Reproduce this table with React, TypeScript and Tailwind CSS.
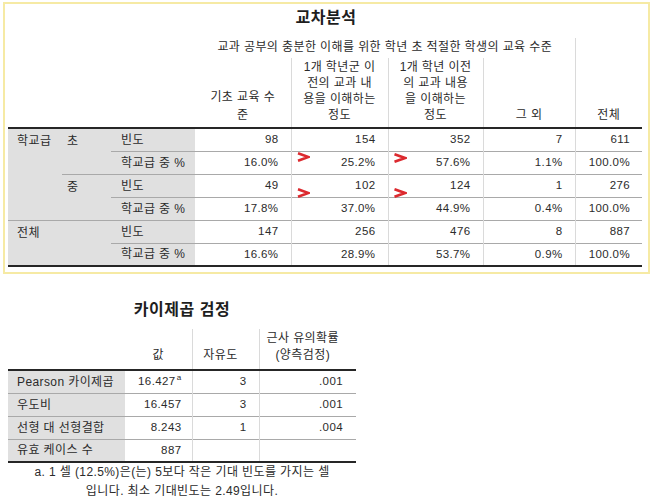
import React from "react";

const FONT = "font-['Liberation_Sans','Noto_Sans_CJK_KR',sans-serif]";

// one red chevron drawn on top of the crosstab
function Chevron({ className }: { className: string }) {
  return (
    <svg className={"absolute " + className} viewBox="0 0 13 10" fill="none">
      <polyline points="1,1.2 11.5,5 1,8.8" stroke="#dc2a2f" strokeWidth="2.6" strokeLinejoin="miter" />
    </svg>
  );
}

const gray = "bg-[#e0e0e0] align-top text-left";
const thin = "border-t border-t-[#a9a9a9]";
const thick = "border-t-2 border-t-[#262626]";
const vline = "border-l border-l-[#dadada]";

function Num({ v, first, cls = "" }: { v: string; first?: boolean; cls?: string }) {
  return (
    <td className={`p-0 pr-3 text-right align-middle text-[11.5px] ${first ? "" : vline} ${cls}`}>{v}</td>
  );
}

function Crosstab() {
  return (
    <div className="ml-[3px] mt-[2px] w-[647px] border-2 border-[#f6eaa4] pl-[3px] pr-[4px] pb-[5px]">
      <div className="h-[34px] pt-[4px] text-center text-[16px] leading-[20px] font-bold tracking-[0.5px] text-[#1e1e1e]">교차분석</div>
      <div className="relative">
        <table className="table-fixed w-[634px] border-collapse">
          <colgroup>
            <col className="w-[54px]" />
            <col className="w-[49px]" />
            <col className="w-[84px]" />
            <col className="w-[96px]" />
            <col className="w-[97px]" />
            <col className="w-[95px]" />
            <col className="w-[92px]" />
            <col className="w-[67px]" />
          </colgroup>
          <thead>
            <tr className="h-[20px]">
              <td colSpan={3} rowSpan={2}></td>
              <td colSpan={4} className="p-0 pt-[1px] align-top text-center text-[12px] leading-[16px]">
                교과 공부의 충분한 이해를 위한 학년 초 적절한 학생의 교육 수준
              </td>
              <td rowSpan={2} className={`p-0 pb-[4px] align-bottom text-center text-[12px] leading-[16px] ${vline}`}>전체</td>
            </tr>
            <tr className="h-[70px]">
              <td className="p-0 pb-[3px] align-bottom text-center text-[12px] leading-[18px]">
                기초 교육 수<br />준
              </td>
              <td className={`p-0 pb-[4px] align-bottom text-center text-[12px] leading-[16px] ${vline}`}>
                1개 학년군 이<br />전의 교과 내<br />용을 이해하는<br />정도
              </td>
              <td className={`p-0 pb-[4px] align-bottom text-center text-[12px] leading-[16px] ${vline}`}>
                1개 학년 이전<br />의 교과 내용<br />을 이해하는<br />정도
              </td>
              <td className={`p-0 pb-[4px] align-bottom text-center text-[12px] leading-[16px] ${vline}`}>그 외</td>
            </tr>
          </thead>
          <tbody className="text-[12px]">
            <tr className="h-[23px]">
              <td rowSpan={4} className={`${gray} ${thick} pl-[9px] pt-[4px] leading-[16px]`}>학교급</td>
              <td rowSpan={2} className={`${gray} ${thick} pl-[5px] pt-[4px] leading-[16px]`}>초</td>
              <td className={`${gray} ${thick} pl-[10px] !align-middle`}>빈도</td>
              <Num v="98" first cls={thick} />
              <Num v="154" cls={thick} />
              <Num v="352" cls={thick} />
              <Num v="7" cls={thick} />
              <Num v="611" cls={thick} />
            </tr>
            <tr className="h-[23px]">
              <td className={`${gray} ${thin} pl-[10px] !align-middle`}>학교급 중 %</td>
              <Num v="16.0%" first cls={thin} />
              <Num v="25.2%" cls={thin} />
              <Num v="57.6%" cls={thin} />
              <Num v="1.1%" cls={thin} />
              <Num v="100.0%" cls={thin} />
            </tr>
            <tr className="h-[23px]">
              <td rowSpan={2} className={`${gray} ${thin} pl-[5px] pt-[4px] leading-[16px]`}>중</td>
              <td className={`${gray} ${thin} pl-[10px] !align-middle`}>빈도</td>
              <Num v="49" first cls={thin} />
              <Num v="102" cls={thin} />
              <Num v="124" cls={thin} />
              <Num v="1" cls={thin} />
              <Num v="276" cls={thin} />
            </tr>
            <tr className="h-[23px]">
              <td className={`${gray} ${thin} pl-[10px] !align-middle`}>학교급 중 %</td>
              <Num v="17.8%" first cls={thin} />
              <Num v="37.0%" cls={thin} />
              <Num v="44.9%" cls={thin} />
              <Num v="0.4%" cls={thin} />
              <Num v="100.0%" cls={thin} />
            </tr>
            <tr className="h-[23px]">
              <td rowSpan={2} colSpan={2} className={`${gray} ${thin} border-b-2 border-b-[#262626] pl-[9px] pt-[4px] leading-[16px]`}>전체</td>
              <td className={`${gray} ${thin} pl-[10px] !align-middle`}>빈도</td>
              <Num v="147" first cls={thin} />
              <Num v="256" cls={thin} />
              <Num v="476" cls={thin} />
              <Num v="8" cls={thin} />
              <Num v="887" cls={thin} />
            </tr>
            <tr className="h-[23px] border-b-2 border-b-[#262626]">
              <td className={`${gray} ${thin} pl-[10px] !align-middle`}>학교급 중 %</td>
              <Num v="16.6%" first cls={thin} />
              <Num v="28.9%" cls={thin} />
              <Num v="53.7%" cls={thin} />
              <Num v="0.9%" cls={thin} />
              <Num v="100.0%" cls={thin} />
            </tr>
          </tbody>
        </table>
        <Chevron className="left-[289px] top-[114px] w-[13px] h-[10px]" />
        <Chevron className="left-[385px] top-[115px] w-[14px] h-[10px]" />
        <Chevron className="left-[289px] top-[150px] w-[13px] h-[10px]" />
        <Chevron className="left-[385px] top-[150px] w-[14px] h-[10px]" />
      </div>
    </div>
  );
}

function ChiSquare() {
  const rows = [
    { label: "Pearson 카이제곱", v: "16.427", sup: "a", df: "3", p: ".001" },
    { label: "우도비", v: "16.457", df: "3", p: ".001" },
    { label: "선형 대 선형결합", v: "8.243", df: "1", p: ".004" },
    { label: "유효 케이스 수", v: "887", df: "", p: "" },
  ];
  return (
    <div className="ml-[8px] mt-[23px] w-[348px]">
      <div className="h-[32px] pt-[3px] text-center text-[16px] leading-[20px] font-bold tracking-[0.5px] text-[#1e1e1e]">카이제곱 검정</div>
      <table className="table-fixed w-[348px] border-collapse">
        <colgroup>
          <col className="w-[117px]" />
          <col className="w-[67px]" />
          <col className="w-[67px]" />
          <col className="w-[97px]" />
        </colgroup>
        <thead>
          <tr className="h-[41px]">
            <td></td>
            <td className="p-0 pb-[5px] align-bottom text-center text-[12px] leading-[17px]">값</td>
            <td className={`p-0 pb-[5px] pr-[10px] align-bottom text-center text-[12px] leading-[17px] ${vline}`}>자유도</td>
            <td className={`p-0 pb-[5px] pr-[10px] align-bottom text-center text-[12px] leading-[17px] ${vline}`}>
              근사 유의확률<br />(양측검정)
            </td>
          </tr>
        </thead>
        <tbody className="text-[12px]">
          {rows.map((r, i) => {
            const line = i === 0 ? thick : thin;
            return (
              <tr key={r.label} className={"h-[23px]" + (i === rows.length - 1 ? " border-b-2 border-b-[#262626]" : "")}>
                <td className={`bg-[#e0e0e0] pl-[9px] align-middle text-left whitespace-nowrap ${line}`}>{r.label}</td>
                <td className={`p-0 pr-[10px] text-right align-middle text-[11.5px] ${line}`}>
                  {r.v}
                  {r.sup && <span className="relative -top-[5px] ml-[1px] text-[8px] leading-none">{r.sup}</span>}
                </td>
                <td className={`p-0 pr-[12px] text-right align-middle text-[11.5px] ${vline} ${line}`}>{r.df}</td>
                <td className={`p-0 pr-[13px] text-right align-middle text-[11.5px] ${vline} ${line}`}>{r.p}</td>
              </tr>
            );
          })}
        </tbody>
      </table>
      <div className="text-center text-[12px] leading-[19px]">
        a. 1 셀 (12.5%)은(는) 5보다 작은 기대 빈도를 가지는 셀<br />입니다. 최소 기대빈도는 2.49입니다.
      </div>
    </div>
  );
}

export default function App() {
  return (
    <div className={`w-[655px] h-[502px] overflow-hidden bg-white text-[#2b2b2b] tracking-[0.4px] ${FONT}`}>
      <Crosstab />
      <ChiSquare />
    </div>
  );
}
